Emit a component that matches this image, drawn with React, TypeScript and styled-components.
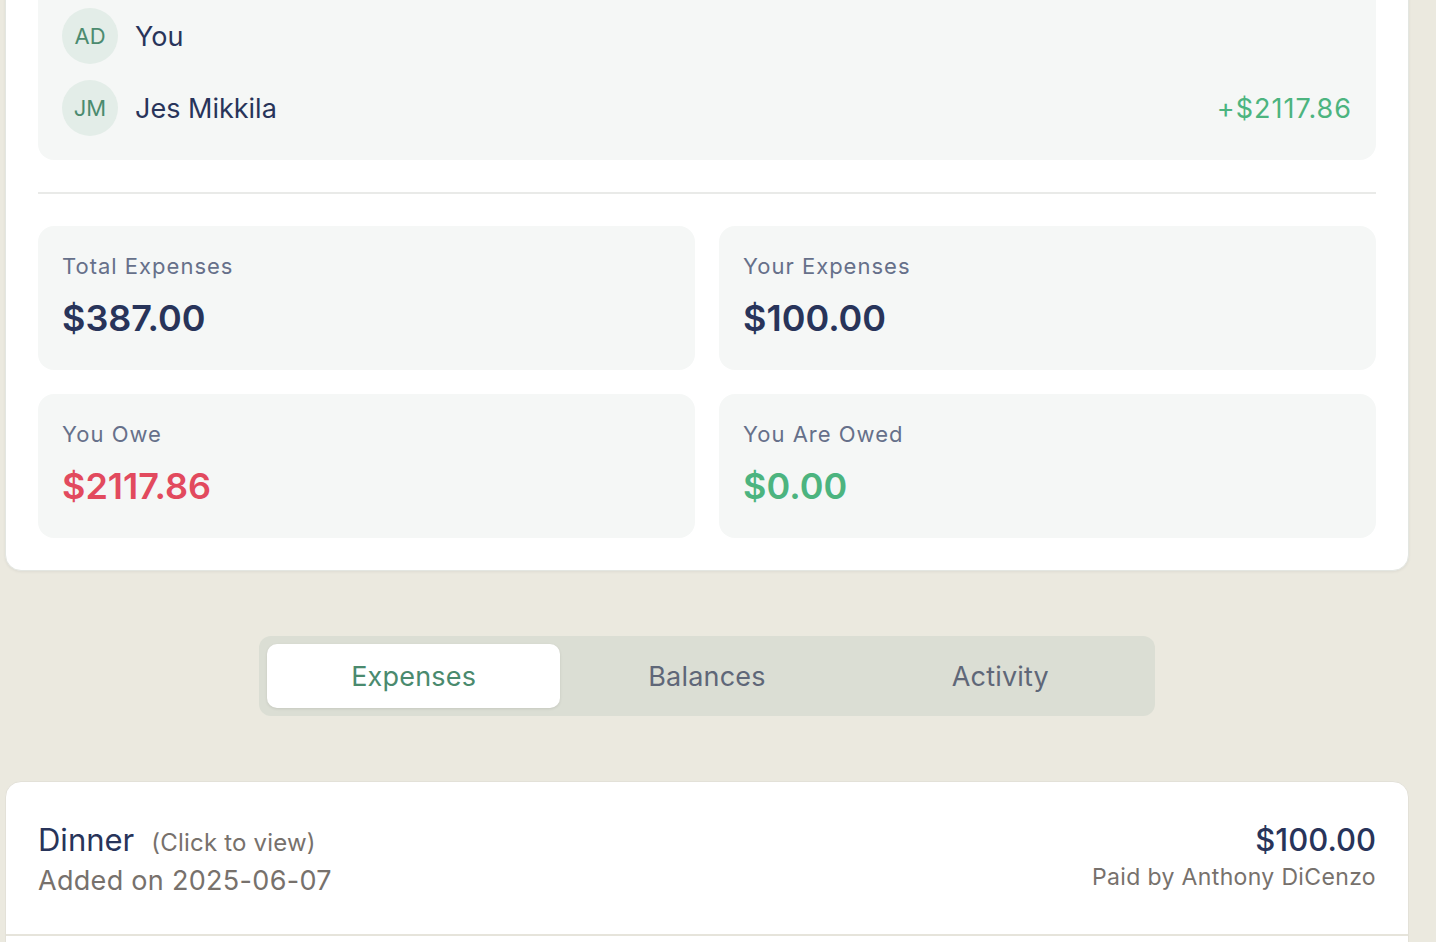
import React from 'react';
import styled, { createGlobalStyle } from 'styled-components';

const GlobalStyle = createGlobalStyle`
  html, body {
    margin: 0;
    padding: 0;
    background: #ebe9df;
    font-family: Inter, "Noto Sans", "Liberation Sans", sans-serif;
    overflow: hidden;
  }
`;

const participants = [
  { initials: 'AD', name: 'You', balance: null },
  { initials: 'JM', name: 'Jes Mikkila', balance: '+$2117.86' },
];

const stats = [
  { label: 'Total Expenses', value: '$387.00', tone: 'default' },
  { label: 'Your Expenses', value: '$100.00', tone: 'default' },
  { label: 'You Owe', value: '$2117.86', tone: 'negative' },
  { label: 'You Are Owed', value: '$0.00', tone: 'positive' },
] as const;

const tabs = ['Expenses', 'Balances', 'Activity'];

type Tone = 'default' | 'negative' | 'positive';

const toneColor: Record<Tone, string> = {
  default: '#28345a',
  negative: '#e24a5e',
  positive: '#4cb47f',
};

const App = () => {
  const [active, setActive] = React.useState('Expenses');

  return (
    <Page>
      <GlobalStyle />
      <SummaryCard>
        <Participants>
          {participants.map((p) => (
            <ParticipantRow key={p.initials}>
              <Avatar>{p.initials}</Avatar>
              <Name>{p.name}</Name>
              {p.balance && <Balance>{p.balance}</Balance>}
            </ParticipantRow>
          ))}
        </Participants>
        <Divider />
        <StatsGrid>
          {stats.map((s) => (
            <StatCard key={s.label}>
              <StatLabel>{s.label}</StatLabel>
              <StatValue $tone={s.tone}>{s.value}</StatValue>
            </StatCard>
          ))}
        </StatsGrid>
      </SummaryCard>

      <TabBar>
        {tabs.map((t) => (
          <Tab key={t} $active={t === active} onClick={() => setActive(t)}>
            {t}
          </Tab>
        ))}
      </TabBar>

      <ExpenseList>
        <ExpenseRow>
          <div>
            <TitleLine>
              <ExpenseTitle>Dinner</ExpenseTitle>
              <Hint>(Click to view)</Hint>
            </TitleLine>
            <Meta>Added on 2025-06-07</Meta>
          </div>
          <RightCol>
            <Amount>$100.00</Amount>
            <PaidBy>Paid by Anthony DiCenzo</PaidBy>
          </RightCol>
        </ExpenseRow>
      </ExpenseList>
    </Page>
  );
};

export default App;

const Page = styled.div`
  box-sizing: border-box;
  width: 1436px;
  padding: 0 27px 0 5px;
`;

const SummaryCard = styled.section`
  margin-top: -49px;
  background: #fff;
  border: 1px solid #e3e6e1;
  border-radius: 16px;
  padding: 32px;
  box-shadow: 0 1px 3px rgba(0, 0, 0, 0.06);
`;

const Participants = styled.div`
  background: #f5f7f6;
  border-radius: 16px;
  padding: 24px;
  display: flex;
  flex-direction: column;
  gap: 16px;
`;

const ParticipantRow = styled.div`
  display: flex;
  align-items: center;
  gap: 17px;
`;

const Avatar = styled.div`
  width: 56px;
  height: 56px;
  border-radius: 50%;
  background: #e3ede8;
  color: #4b8b6f;
  font-size: 22px;
  display: flex;
  align-items: center;
  justify-content: center;
  flex-shrink: 0;
`;

const Name = styled.span`
  font-size: 27px;
  color: #28345a;
`;

const Balance = styled.span`
  margin-left: auto;
  font-size: 27px;
  letter-spacing: 1px;
  color: #4cb47f;
`;

const Divider = styled.hr`
  border: none;
  height: 2px;
  background: #e9eae8;
  margin: 32px 0;
`;

const StatsGrid = styled.div`
  display: grid;
  grid-template-columns: 1fr 1fr;
  gap: 24px;
`;

const StatCard = styled.div`
  background: #f5f7f6;
  border-radius: 16px;
  padding: 26px 24px;
  height: 144px;
  box-sizing: border-box;
`;

const StatLabel = styled.div`
  font-size: 22px;
  line-height: 28px;
  letter-spacing: 1px;
  color: #66708a;
`;

const StatValue = styled.div<{ $tone: Tone }>`
  margin-top: 14px;
  font-size: 36px;
  line-height: 48px;
  font-weight: 600;
  color: ${(p) => toneColor[p.$tone]};
`;

const TabBar = styled.nav`
  width: 896px;
  box-sizing: border-box;
  margin: 65px auto 65px;
  padding: 8px;
  background: #dbded4;
  border-radius: 12px;
  display: grid;
  grid-template-columns: repeat(3, 1fr);
`;

const Tab = styled.button<{ $active: boolean }>`
  height: 64px;
  border: none;
  border-radius: 10px;
  font-family: inherit;
  font-size: 27px;
  letter-spacing: 0.2px;
  cursor: pointer;
  background: ${(p) => (p.$active ? '#fff' : 'transparent')};
  color: ${(p) => (p.$active ? '#4a8a6e' : '#5f6778')};
  box-shadow: ${(p) => (p.$active ? '0 1px 3px rgba(0,0,0,0.1)' : 'none')};
`;

const ExpenseList = styled.section`
  background: #fff;
  border: 1px solid #e3e1d8;
  border-radius: 16px;
  padding-bottom: 40px;
`;

const ExpenseRow = styled.div`
  display: flex;
  justify-content: space-between;
  align-items: flex-start;
  padding: 39px 32px 37px;
  border-bottom: 2px solid #e6e4db;
  cursor: pointer;
`;

const TitleLine = styled.div`
  display: flex;
  align-items: baseline;
  gap: 17px;
`;

const ExpenseTitle = styled.span`
  font-size: 31px;
  color: #28345a;
`;

const Hint = styled.span`
  font-size: 24px;
  letter-spacing: 0.2px;
  color: #77716c;
`;

const Meta = styled.div`
  margin-top: 6px;
  font-size: 27px;
  letter-spacing: 0.3px;
  color: #77716c;
`;

const RightCol = styled.div`
  text-align: right;
`;

const Amount = styled.div`
  font-size: 31px;
  font-weight: 500;
  color: #28345a;
`;

const PaidBy = styled.div`
  margin-top: 5px;
  font-size: 23px;
  letter-spacing: 0.35px;
  color: #77716c;
`;
